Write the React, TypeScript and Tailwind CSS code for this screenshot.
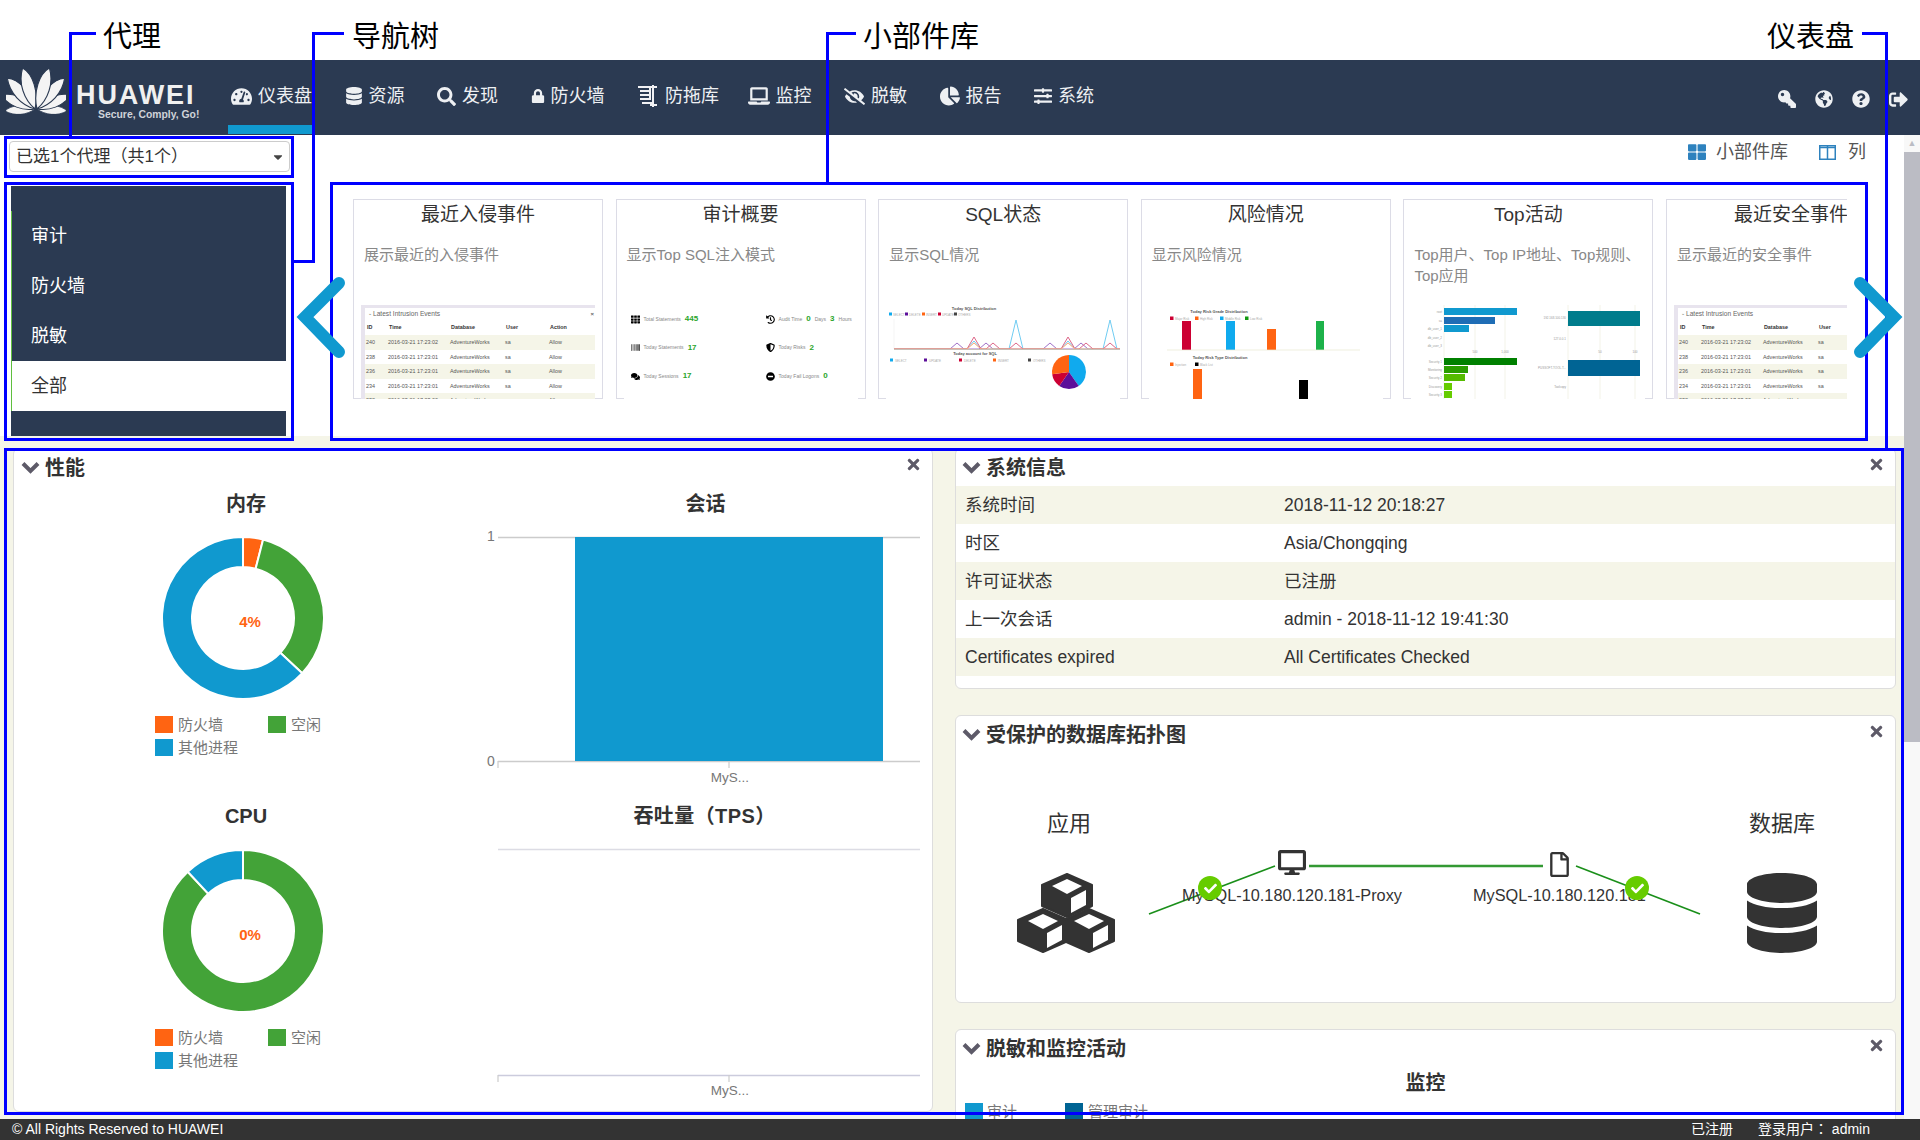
import React from 'react';
import {
  FaTachometerAlt,
  FaDatabase,
  FaSearch,
  FaLock,
  FaLaptop,
  FaEyeSlash,
  FaChartPie,
  FaSlidersH,
  FaKey,
  FaGlobeAmericas,
  FaQuestionCircle,
  FaSignOutAlt,
  FaThLarge,
  FaTimes,
  FaDesktop,
  FaRegFile,
  FaCheck,
  FaCaretDown,
  FaTh,
  FaBarcode,
  FaComments,
  FaHistory,
  FaShieldAlt,
  FaMinusCircle,
} from 'react-icons/fa';

const BLUE = '#1099cf';
const GREEN = '#43a338';
const ORANGE = '#ff6412';
const TC_FONT = "[font-family:'Liberation_Sans','Noto_Sans_CJK_TC',sans-serif]";

function DragIcon() {
  return (
    <svg width="22" height="24" viewBox="0 0 22 24" fill="none" stroke="#f1f1f4" strokeWidth="2">
      <path d="M1 3h12v12H3" />
      <path d="M3 7h10M3 11h10" />
      <path d="M16 1v22M13 3h7M13 21h7M5 19h11" />
    </svg>
  );
}

const navItems = [
  { label: '仪表盘', icon: <FaTachometerAlt size={21} />, active: true, cls: '' },
  { label: '资源', icon: <FaDatabase size={18} />, cls: '' },
  { label: '发现', icon: <FaSearch size={19} />, cls: '' },
  { label: '防火墙', icon: <FaLock size={14} />, cls: '' },
  { label: '防拖库', icon: <DragIcon />, cls: '' },
  { label: '监控', icon: <FaLaptop size={22} />, cls: '-ml-[4px]' },
  { label: '脱敏', icon: <FaEyeSlash size={21} />, cls: '' },
  { label: '报告', icon: <FaChartPie size={20} />, cls: '' },
  { label: '系统', icon: <FaSlidersH size={18} />, cls: '' },
];

function Logo() {
  const petals = [
    { a: 90, l: 0.68 },
    { a: 64, l: 0.82 },
    { a: 38, l: 0.94 },
    { a: 13, l: 0.97 },
  ];
  return (
    <svg width="60" height="46" viewBox="0 0 60 46" fill="#f4f4f4" stroke="#2b3a52" strokeWidth="1.2" className="shrink-0">
      {petals.map((p) => (
        <g key={p.a}>
          <path transform={`translate(29 41) rotate(${-p.a}) scale(${p.l})`} d="M0 0C-9 -12 -11 -30 -3 -44C6 -36 8 -16 0 0Z" />
          <path transform={`translate(31 41) rotate(${p.a}) scale(${p.l})`} d="M0 0C9 -12 11 -30 3 -44C-6 -36 -8 -16 0 0Z" />
        </g>
      ))}
    </svg>
  );
}

function Header() {
  return (
    <div className="h-[75px] bg-[#2b3a52] flex text-[#eef0f3] shrink-0">
      <div className="w-[231px] shrink-0 flex pl-[6px] pt-[8px]">
        <Logo />
        <div className="ml-[10px] pt-[14px] w-[120px]">
          <div className="text-[27px] leading-[27px] font-bold tracking-[1.9px] text-[#f0f0f0] whitespace-nowrap">HUAWEI</div>
          <div className="pl-[22px] text-[10.4px] leading-[14px] font-bold text-[#d0d3d9] whitespace-nowrap -mt-[1px]">Secure, Comply, Go!</div>
        </div>
      </div>
      <div className="flex gap-[32.5px] h-full">
        {navItems.map((item) => (
          <div key={item.label} className={`relative flex items-center gap-[6px] h-full pb-[3px] ${item.cls}`}>
            <span className="flex items-center justify-center">{item.icon}</span>
            <span className="text-[18px] whitespace-nowrap">{item.label}</span>
            {item.active && <div className="absolute left-[-3px] right-0 top-[65px] h-[9px] bg-[#1099cf]" />}
          </div>
        ))}
      </div>
      <div className="ml-auto flex items-center gap-[19px] pr-[12px] pt-[3px]">
        <FaKey size={18} className="-scale-x-100" />
        <FaGlobeAmericas size={18} />
        <FaQuestionCircle size={18} />
        <FaSignOutAlt size={19} />
      </div>
    </div>
  );
}

const tableRows = [
  ['240', '2016-03-21 17:23:02'],
  ['238', '2016-03-21 17:23:01'],
  ['236', '2016-03-21 17:23:01'],
  ['234', '2016-03-21 17:23:01'],
  ['232', '2016-03-21 17:23:00'],
];

function TableThumb() {
  return (
    <div className="h-full bg-[#e8e4ee] pl-[4px] pt-[3px] pr-[1px]">
      <div className="w-[232px] h-full bg-white text-[5.4px] text-[#555]">
        <div className="h-[11px] flex items-center pl-[3px] text-[6.6px] text-[#666] relative">
          <span className="mr-[1px] text-[5px]">⌄</span>Latest Intrusion Events
          <span className="absolute right-[3px] top-[2px] text-[6px] font-bold">×</span>
        </div>
        <div className="h-[16px] grid grid-cols-[22px_62px_55px_44px_1fr] items-center pl-[2px] font-bold text-[#333]">
          <span>ID</span>
          <span>Time</span>
          <span>Database</span>
          <span>User</span>
          <span>Action</span>
        </div>
        {tableRows.map((r, i) => (
          <div
            key={r[0]}
            className={`h-[14.5px] grid grid-cols-[22px_62px_55px_44px_1fr] items-center pl-[1px] ${i % 2 === 0 ? 'bg-[#f5f5e8]' : 'bg-white'}`}
          >
            <span>{r[0]}</span>
            <span>{r[1]}</span>
            <span>AdventureWorks</span>
            <span>sa</span>
            <span>Allow</span>
          </div>
        ))}
      </div>
    </div>
  );
}

function StatsThumb() {
  const stats = [
    { icon: <FaTh size={9} />, label: 'Total Statements', value: '445' },
    { icon: <FaHistory size={9} />, label: 'Audit Time', value: '0', extra: true },
    { icon: <FaBarcode size={9} />, label: 'Today Statements', value: '17' },
    { icon: <FaShieldAlt size={9} />, label: 'Today Risks', value: '2' },
    { icon: <FaComments size={9} />, label: 'Today Sessions', value: '17' },
    { icon: <FaMinusCircle size={9} />, label: 'Today Fail Logons', value: '0' },
  ];
  return (
    <div className="grid grid-cols-[135px_1fr] pl-[7px] text-[5px] text-[#888]">
      {stats.map((s) => (
        <div key={s.label} className="h-[28.5px] flex items-center gap-[4px] text-black">
          {s.icon}
          <span className="text-[#888]">{s.label}</span>
          <span className="text-[8px] font-bold text-[#2aa52a]">{s.value}</span>
          {s.extra && (
            <>
              <span className="text-[#888]">Days</span>
              <span className="text-[8px] font-bold text-[#2aa52a]">3</span>
              <span className="text-[#888]">Hours</span>
            </>
          )}
        </div>
      ))}
    </div>
  );
}

function tri(peaks: number[][]) {
  const pts: string[] = ['16,44'];
  peaks.forEach(([x, y]) => {
    pts.push(`${x - 7},44`, `${x},${y}`, `${x + 7},44`);
  });
  pts.push('242,44');
  return pts.join(' ');
}

function pt(cx: number, cy: number, r: number, deg: number) {
  const a = ((deg - 90) * Math.PI) / 180;
  return `${(cx + r * Math.cos(a)).toFixed(2)} ${(cy + r * Math.sin(a)).toFixed(2)}`;
}

function ring(cx: number, cy: number, inner: number, outer: number, a0: number, a1: number) {
  const large = a1 - a0 > 180 ? 1 : 0;
  return `M${pt(cx, cy, outer, a0)}A${outer} ${outer} 0 ${large} 1 ${pt(cx, cy, outer, a1)}L${pt(cx, cy, inner, a1)}A${inner} ${inner} 0 ${large} 0 ${pt(cx, cy, inner, a0)}Z`;
}

function pie(cx: number, cy: number, r: number, a0: number, a1: number) {
  const large = a1 - a0 > 180 ? 1 : 0;
  return `M${cx} ${cy}L${pt(cx, cy, r, a0)}A${r} ${r} 0 ${large} 1 ${pt(cx, cy, r, a1)}Z`;
}

function SqlThumb() {
  const legend1 = [
    [11, '#10aaee', 'SELECT'],
    [27, '#5c0f9a', 'DELETE'],
    [44, '#ff6412', 'INSERT'],
    [60, '#cc0033', 'UPDATE'],
    [76, '#444', 'OTHERS'],
  ] as const;
  const legend2 = [
    [12, '#10aaee', 'SELECT'],
    [46, '#5c0f9a', 'UPDATE'],
    [81, '#cc0033', 'DELETE'],
    [115, '#ff6412', 'INSERT'],
    [150, '#444', 'OTHERS'],
  ] as const;
  return (
    <svg viewBox="8 0 234 94" className="w-[234px] h-[94px]">
      <text x="96" y="5" fontSize="4" textAnchor="middle" fill="#555" fontWeight="bold">Today SQL Distribution</text>
      {legend1.map(([x, c, t]) => (
        <g key={t}>
          <rect x={x} y="7.5" width="3" height="3" fill={c} />
          <text x={x + 4} y="10.5" fontSize="3" fill="#aaa">{t}</text>
        </g>
      ))}
      <path d="M16 14V44" stroke="#eee" strokeWidth="0.6" />
      <polyline points={tri([[79, 38], [108, 38], [172, 38], [203, 38]])} fill="none" stroke="#a070c8" strokeWidth="1" />
      <polyline points={tri([[96, 36], [138, 15], [190, 36], [232, 15]])} fill="none" stroke="#70ccf2" strokeWidth="1" />
      <polyline points={tri([[96, 32], [115, 38], [138, 38], [190, 32], [208, 38], [232, 38]])} fill="none" stroke="#dd6688" strokeWidth="1" />
      <polyline points={tri([[96, 38], [190, 38]])} fill="none" stroke="#ffaa77" strokeWidth="1" />
      <line x1="16" y1="44.5" x2="242" y2="44.5" stroke="#c8c0b8" strokeWidth="1" />
      <text x="97" y="50" fontSize="4" textAnchor="middle" fill="#555" fontWeight="bold">Today account for SQL</text>
      {legend2.map(([x, c, t]) => (
        <g key={t}>
          <rect x={x} y="53.5" width="3" height="3" fill={c} />
          <text x={x + 5} y="56.5" fontSize="3" fill="#aaa">{t}</text>
        </g>
      ))}
      <path d={pie(191, 67, 17, 0, 145)} fill="#10aaee" />
      <path d={pie(191, 67, 17, 145, 215)} fill="#5c0f9a" />
      <path d={pie(191, 67, 17, 215, 262)} fill="#cc0033" />
      <path d={pie(191, 67, 17, 262, 360)} fill="#ff6412" />
    </svg>
  );
}

function RiskThumb() {
  return (
    <svg viewBox="8 0 234 94" className="w-[234px] h-[94px]">
      <text x="78" y="7.5" fontSize="4" textAnchor="middle" fill="#555" fontWeight="bold">Today Risk Grade Distribution</text>
      {[
        [29, '#cc0033', 'Major Risk'],
        [54, '#ff6412', 'High Risk'],
        [79, '#10aaee', 'Middle Risk'],
        [104, '#119911', 'Low Risk'],
      ].map(([x, c, t]) => (
        <g key={t as string}>
          <rect x={x as number} y="11.5" width="3.5" height="3.5" fill={c as string} />
          <text x={(x as number) + 5} y="15" fontSize="3" fill="#aaa">{t}</text>
        </g>
      ))}
      <rect x="41" y="16" width="9" height="29" fill="#cc0033" />
      <rect x="85" y="16" width="9" height="29" fill="#10aaee" />
      <rect x="126" y="24" width="9" height="21" fill="#ff6412" />
      <rect x="175" y="16" width="8" height="29" fill="#1db24a" />
      <line x1="26" y1="45" x2="219" y2="45" stroke="#e8e8d0" strokeWidth="0.7" />
      <text x="79" y="53.5" fontSize="4" textAnchor="middle" fill="#555" fontWeight="bold">Today Risk Type Distribution</text>
      <rect x="29" y="57.5" width="3.5" height="3.5" fill="#ff6412" />
      <text x="34" y="61" fontSize="3" fill="#aaa">Injection</text>
      <rect x="54" y="57.5" width="3.5" height="3.5" fill="#000" />
      <text x="59" y="61" fontSize="3" fill="#aaa">Black List</text>
      <rect x="52" y="64" width="9" height="32" fill="#ff6412" />
      <rect x="158" y="75" width="9" height="21" fill="#000" />
    </svg>
  );
}

function TopThumb() {
  const blue = [
    [3, 114, '#1099cf', 'root'],
    [12, 92, '#1f6db5', 'sa'],
    [20, 66, '#1099cf', 'db_user_1'],
    [29, 41, '#1099cf', 'db_user_2'],
    [37, 41, '#1099cf', 'db_user_3'],
  ] as const;
  const green = [
    [53, 114, '#008000', 'Security 1'],
    [61, 65, '#2a9d00', 'Monitoring'],
    [69, 62, '#55bb00', 'Security 2'],
    [78, 49, '#66cc00', 'Discovery'],
    [86, 49, '#66cc00', 'Security 3'],
  ] as const;
  return (
    <svg viewBox="8 0 234 94" className="w-[234px] h-[94px]">
      {[41, 72, 102, 165, 197, 232].map((x) => (
        <line key={x} x1={x} y1="0" x2={x} y2="94" stroke="#f0f0e2" strokeWidth="0.8" />
      ))}
      {blue.map(([y, x2, c, t]) => (
        <g key={t}>
          <rect x="41" y={y} width={x2 - 41} height="7" fill={c} />
          <text x="39" y={y + 5} fontSize="3" textAnchor="end" fill="#999">{t}</text>
        </g>
      ))}
      {green.map(([y, x2, c, t]) => (
        <g key={t}>
          <rect x="41" y={y} width={x2 - 41} height="7" fill={c} />
          <text x="39" y={y + 5} fontSize="3" textAnchor="end" fill="#999">{t}</text>
        </g>
      ))}
      <rect x="165" y="6" width="72" height="15" fill="#007c8c" />
      <rect x="165" y="55" width="72" height="16" fill="#006494" />
      <text x="163" y="14" fontSize="3" textAnchor="end" fill="#999">192.168.100.130</text>
      <text x="163" y="35" fontSize="3" textAnchor="end" fill="#999">127.0.0.1</text>
      <text x="163" y="64" fontSize="3" textAnchor="end" fill="#999">PUSSOFT-TOOL.T...</text>
      <text x="163" y="83" fontSize="3" textAnchor="end" fill="#999">Toolcopy</text>
      <text x="72" y="48" fontSize="3" textAnchor="middle" fill="#999">500</text>
      <text x="102" y="48" fontSize="3" textAnchor="middle" fill="#999">1,000</text>
      <text x="197" y="48" fontSize="3" textAnchor="middle" fill="#999">50</text>
      <text x="232" y="48" fontSize="3" textAnchor="middle" fill="#999">100</text>
    </svg>
  );
}

const cards = [
  { title: '最近入侵事件', desc: '展示最近的入侵事件', thumb: <TableThumb /> },
  { title: '审计概要', desc: '显示Top SQL注入模式', thumb: <StatsThumb /> },
  { title: 'SQL状态', desc: '显示SQL情况', thumb: <SqlThumb /> },
  { title: '风险情况', desc: '显示风险情况', thumb: <RiskThumb /> },
  { title: 'Top活动', desc: 'Top用户、Top IP地址、Top规则、Top应用', thumb: <TopThumb /> },
  { title: '最近安全事件', desc: '显示最近的安全事件', thumb: <TableThumb /> },
];

function WidgetCard({ title, desc, thumb }: { title: string; desc: string; thumb: React.ReactNode }) {
  return (
    <div className="w-[250px] h-[200px] shrink-0 border border-[#dcdce6] flex flex-col bg-white">
      <div className="h-[29px] text-[19px] leading-[29px] text-center text-[#333]">{title}</div>
      <p className="mt-[15px] px-[10px] text-[15px] leading-[21px] text-[#888]">{desc}</p>
      <div className="mt-auto -mb-px mx-[7px] h-[94px] overflow-hidden bg-white relative">{thumb}</div>
    </div>
  );
}

function TopSection() {
  return (
    <div className="h-[301px] shrink-0 bg-white flex">
      <div className="w-[290px] shrink-0 pl-[9px]">
        <div className={`mt-[6px] w-[281px] h-[31px] border border-[#ccc] rounded-[4px] flex items-center justify-between pl-[6px] pr-[4px] text-[17px] text-[#333] ${TC_FONT}`}>
          <span>已选1个代理（共1个）</span>
          <FaCaretDown size={14} className="text-[#444]" />
        </div>
        <div className="mt-[14px] ml-[2px] w-[275px] h-[250px] bg-[#2b3a52] pt-[25px]">
          <div className="border-l border-[#5fbf3f] text-[18px]">
            {['审计', '防火墙', '脱敏'].map((n) => (
              <div key={n} className="h-[50px] pl-[19px] flex items-center text-white">{n}</div>
            ))}
            <div className="h-[50px] pl-[19px] flex items-center bg-white text-[#333]">全部</div>
          </div>
        </div>
      </div>
      <div className="flex-1 min-w-0 relative">
        <div className="h-[34px] flex items-center justify-end text-[18px] text-[#555] pr-[38px]">
          <FaThLarge size={18} className="text-[#2e82be] mr-[10px]" />
          <span className="mr-[31px]">小部件库</span>
          <svg width="17" height="15" viewBox="0 0 17 15" fill="none" stroke="#2e82be" strokeWidth="1.5" className="mr-[12px]">
            <rect x="0.75" y="0.75" width="15.5" height="13.5" />
            <path d="M8.5 1v13M1 2.5h15" />
          </svg>
          <span>列</span>
        </div>
        <div className="mt-[30px] ml-[63px] w-[1494px] overflow-hidden flex gap-[12.6px]">
          {cards.map((c) => (
            <WidgetCard key={c.title} {...c} />
          ))}
        </div>
      </div>
    </div>
  );
}

function PanelHeader({ title }: { title: string }) {
  return (
    <div className="h-[37px] flex items-center relative">
      <svg width="19" height="13" viewBox="0 0 19 13" fill="none" stroke="#5d5a68" strokeWidth="4" className="mr-[5px]">
        <path d="M2 2.5L9.5 10L17 2.5" />
      </svg>
      <span className="text-[20px] font-bold text-[#333]">{title}</span>
      <FaTimes size={17} className="absolute right-[10px] top-[7px] text-[#5d5a68]" />
    </div>
  );
}

function Donut({ slices, label }: { slices: { a0: number; a1: number; c: string }[]; label: string }) {
  return (
    <svg width="162" height="162" viewBox="0 0 162 162" className="ml-[148px]">
      {slices.map((s) => (
        <path key={s.c} d={ring(81, 81, 51, 81, s.a0, s.a1)} fill={s.c} stroke="#fff" strokeWidth="2" />
      ))}
      <text x="88" y="90" textAnchor="middle" fontSize="15" fontWeight="bold" fill={ORANGE}>{label}</text>
    </svg>
  );
}

function DonutLegend() {
  return (
    <div className="mt-[17px] ml-[141px] grid grid-cols-[113px_100px] gap-y-[6px] text-[15px] leading-[17px] text-[#777]">
      <div className="flex items-center gap-[5px]"><span className="w-[18px] h-[17px] bg-[#ff6412]" />防火墙</div>
      <div className="flex items-center gap-[5px]"><span className="w-[18px] h-[17px] bg-[#43a338]" />空闲</div>
      <div className="flex items-center gap-[5px]"><span className="w-[18px] h-[17px] bg-[#1099cf]" />其他进程</div>
    </div>
  );
}

function ChartTitle({ children, className = '' }: { children: React.ReactNode; className?: string }) {
  return <div className={`h-[28px] text-[20px] leading-[30px] font-bold text-center text-[#333] ${className}`}>{children}</div>;
}

function PerformancePanel() {
  return (
    <div className="w-[920px] h-[664px] shrink-0 bg-white border border-[#ddd] rounded-[6px] pl-[7px] overflow-hidden">
      <PanelHeader title="性能" />
      <div className="flex mt-[3px]">
        <div className="w-[464px] shrink-0 -ml-[7px]">
          <div className="h-[312px]">
            <ChartTitle>内存</ChartTitle>
            <div className="mt-[20px]">
              <Donut
                label="4%"
                slices={[
                  { a0: 0, a1: 14.4, c: ORANGE },
                  { a0: 14.4, a1: 133, c: GREEN },
                  { a0: 133, a1: 360, c: BLUE },
                ]}
              />
            </div>
            <DonutLegend />
          </div>
          <div className="h-[312px]">
            <ChartTitle>CPU</ChartTitle>
            <div className="mt-[21px]">
              <Donut
                label="0%"
                slices={[
                  { a0: 0, a1: 317, c: GREEN },
                  { a0: 317, a1: 360, c: BLUE },
                ]}
              />
            </div>
            <DonutLegend />
          </div>
        </div>
        <div className="w-[455px] shrink-0">
          <div className="h-[312px]">
            <ChartTitle>会话</ChartTitle>
            <svg width="455" height="284" viewBox="0 0 455 284" fontFamily="Liberation Sans, sans-serif">
              <line x1="20" y1="20.5" x2="442" y2="20.5" stroke="#ccc" strokeWidth="1.5" />
              <line x1="20" y1="244.5" x2="442" y2="244.5" stroke="#ccc" strokeWidth="1.5" />
              <path d="M20 244v7M251 244v7" stroke="#ccc" strokeWidth="1.2" />
              <rect x="97" y="20" width="308" height="224" fill={BLUE} />
              <text x="13" y="24" fontSize="14" textAnchor="middle" fill="#777">1</text>
              <text x="13" y="249" fontSize="14" textAnchor="middle" fill="#777">0</text>
              <text x="252" y="265" fontSize="13.5" textAnchor="middle" fill="#777">MyS...</text>
            </svg>
          </div>
          <div className="h-[312px]">
            <ChartTitle className={`-ml-[2px] tracking-[0.4px] ${TC_FONT}`}>吞吐量（TPS）</ChartTitle>
            <svg width="455" height="284" viewBox="0 0 455 284" fontFamily="Liberation Sans, sans-serif">
              <line x1="20" y1="20.5" x2="442" y2="20.5" stroke="#dcdce4" strokeWidth="1.5" />
              <line x1="20" y1="246.5" x2="442" y2="246.5" stroke="#ccd" strokeWidth="1.5" />
              <path d="M20 246v7M251 246v7" stroke="#ccc" strokeWidth="1.2" />
              <text x="252" y="266" fontSize="13.5" textAnchor="middle" fill="#777">MyS...</text>
            </svg>
          </div>
        </div>
      </div>
    </div>
  );
}

const sysRows = [
  ['系统时间', '2018-11-12 20:18:27'],
  ['时区', 'Asia/Chongqing'],
  ['许可证状态', '已注册'],
  ['上一次会话', 'admin - 2018-11-12 19:41:30'],
  ['Certificates expired', 'All Certificates Checked'],
];

function SystemPanel() {
  return (
    <div className="h-[241px] shrink-0 bg-white border border-[#ddd] rounded-[6px]">
      <div className="pl-[6px]"><PanelHeader title="系统信息" /></div>
      {sysRows.map((r, i) => (
        <div key={r[0]} className={`h-[38px] flex items-center pl-[9px] text-[17.5px] text-[#333] ${i % 2 === 0 ? 'bg-[#f5f5e8]' : 'bg-white'}`}>
          <span className="w-[319px] shrink-0">{r[0]}</span>
          <span>{r[1]}</span>
        </div>
      ))}
    </div>
  );
}

function CheckBadge({ className }: { className: string }) {
  return (
    <div className={`absolute w-[24px] h-[24px] rounded-full bg-[#66cc00] flex items-center justify-center text-white ${className}`}>
      <FaCheck size={13} />
    </div>
  );
}

// one isometric block of the cubes drawing
function Cube({ cx, top }: { cx: number; top: number }) {
  const w = 50;
  const h = 43;
  return (
    <g>
      <path
        d={`M${cx} ${top}L${cx + w / 2} ${top + 11}V${top + h - 11}L${cx} ${top + h}L${cx - w / 2} ${top + h - 11}V${top + 11}Z`}
        fill="#333"
        stroke="#333"
        strokeWidth="2"
        strokeLinejoin="round"
      />
      <path d={`M${cx} ${top + 5}L${cx + 15} ${top + 12}L${cx} ${top + 20}L${cx - 15} ${top + 12}Z`} fill="#fff" />
      <path d={`M${cx + 4} ${top + 24}L${cx + 19} ${top + 16}V${top + 31}L${cx + 4} ${top + 39}Z`} fill="#fff" />
    </g>
  );
}

function CubesIcon() {
  return (
    <svg width="98" height="80" viewBox="0 0 98 80" className="absolute left-[55px] top-[120px]">
      <Cube cx={50} top={1} />
      <Cube cx={26} top={36} />
      <Cube cx={72} top={36} />
    </svg>
  );
}

function TopologyPanel() {
  return (
    <div className="h-[288px] bg-white border border-[#ddd] rounded-[6px] pl-[6px] shrink-0">
      <PanelHeader title="受保护的数据库拓扑图" />
      {/* diagram is a free canvas, origin at panel left + header bottom */}
      <div className="relative h-[249px]">
        <svg width="934" height="249" viewBox="0 0 934 249" className="absolute left-0 top-0">
          <line x1="187" y1="161" x2="313" y2="113" stroke="#1a8f1a" strokeWidth="1.6" />
          <line x1="347" y1="113" x2="581" y2="113" stroke="#339933" strokeWidth="2.5" />
          <line x1="614" y1="113" x2="738" y2="161" stroke="#1a8f1a" strokeWidth="1.6" />
        </svg>
        <div className="absolute left-[83px] top-[57px] w-[48px] text-center text-[22px] leading-[28px] text-[#333]">应用</div>
        <div className="absolute left-[786px] top-[57px] w-[68px] text-center text-[22px] leading-[28px] text-[#333]">数据库</div>
        <CubesIcon />
        <FaDatabase className="absolute left-[785px] top-[120px] w-[70px] h-[80px] text-[#333]" />
        <FaDesktop className="absolute left-[316px] top-[97px] w-[28px] h-[25px] text-[#333]" />
        <FaRegFile className="absolute left-[587px] top-[99px] w-[21px] h-[25px] text-[#333]" />
        <span className="absolute left-[220px] top-[130px] text-[16.3px] leading-[24px] text-[#333] whitespace-nowrap">MySQL-10.180.120.181-Proxy</span>
        <span className="absolute left-[511px] top-[130px] text-[16.3px] leading-[24px] text-[#333] whitespace-nowrap">MySQL-10.180.120.181</span>
        <CheckBadge className="left-[236px] top-[123px]" />
        <CheckBadge className="left-[663px] top-[123px]" />
      </div>
    </div>
  );
}

function ActivityPanel() {
  return (
    <div className="h-[140px] bg-white border border-[#ddd] rounded-[6px] pl-[6px] shrink-0">
      <PanelHeader title="脱敏和监控活动" />
      <div className="h-[28px] text-[20px] leading-[28px] font-bold text-center text-[#333] -ml-[6px] pt-[2px]">监控</div>
      <div className="mt-[8px] ml-[3px] flex text-[15px] leading-[18px] text-[#777]">
        <div className="w-[100px] flex items-center gap-[4px]"><span className="w-[18px] h-[18px] bg-[#1099cf]" />审计</div>
        <div className="flex items-center gap-[5px]"><span className="w-[18px] h-[18px] bg-[#006494]" />管理审计</div>
      </div>
    </div>
  );
}

function Callouts() {
  const line = 'absolute bg-[#0000ff]';
  const box = 'absolute border-[3px] border-[#0000ff]';
  const text = 'absolute top-[17px] text-[29px] leading-[40px] text-black whitespace-nowrap';
  return (
    <div className="absolute inset-0 pointer-events-none">
      <div className={`${line} left-[69px] top-[32px] w-[27px] h-[3px]`} />
      <div className={`${line} left-[69px] top-[32px] w-[3px] h-[105px]`} />
      <span className={`${text} left-[103px]`}>代理</span>
      <div className={`${line} left-[312px] top-[32px] w-[32px] h-[3px]`} />
      <div className={`${line} left-[312px] top-[32px] w-[3px] h-[231px]`} />
      <div className={`${line} left-[293px] top-[260px] w-[22px] h-[3px]`} />
      <span className={`${text} left-[352px]`}>导航树</span>
      <div className={`${line} left-[826px] top-[32px] w-[30px] h-[3px]`} />
      <div className={`${line} left-[826px] top-[32px] w-[3px] h-[151px]`} />
      <span className={`${text} left-[863px]`}>小部件库</span>
      <div className={`${line} left-[1862px] top-[32px] w-[26px] h-[3px]`} />
      <div className={`${line} left-[1885px] top-[32px] w-[3px] h-[418px]`} />
      <span className={`${text} left-[1767px]`}>仪表盘</span>

      <div className={`${box} left-[4px] top-[136px] w-[290px] h-[42px]`} />
      <div className={`${box} left-[4px] top-[182px] w-[290px] h-[259px]`} />
      <div className={`${box} left-[330px] top-[182px] w-[1538px] h-[259px]`} />
      <div className={`${box} left-[4px] top-[448px] w-[1900px] h-[667px]`} />

      <svg width="1920" height="1140" className="absolute inset-0" fill="none" stroke="#1099cf" strokeWidth="12" strokeLinecap="round" strokeLinejoin="miter">
        <path d="M339 283L305 317L339 352" />
        <path d="M1860 283L1894 317L1860 352" />
      </svg>
    </div>
  );
}

export default function App() {
  return (
    <div className="relative w-[1920px] h-[1140px] overflow-hidden bg-white flex flex-col [font-family:'Liberation_Sans','Noto_Sans_CJK_SC',sans-serif]">
      <div className="h-[60px] shrink-0" />
      <Header />
      <div className="flex-1 min-h-0 flex">
        <div className="w-[1904px] shrink-0 flex flex-col">
          <TopSection />
          <div className="flex-1 min-h-0 bg-[#f5f5e8] pt-[12px] pl-[13px] flex gap-[22px] overflow-hidden">
            <PerformancePanel />
            <div className="w-[941px] shrink-0 flex flex-col gap-[26px]">
              <SystemPanel />
              <TopologyPanel />
              <ActivityPanel />
            </div>
          </div>
        </div>
        <div className="w-[16px] shrink-0 bg-[#f8f8f8] flex flex-col">
          <div className="h-[17px] flex items-center justify-center text-[9px] text-[#bbbcc4]">▲</div>
          <div className="h-[590px] bg-[#bbbcc4]" />
        </div>
      </div>
      <div className={`h-[21px] shrink-0 bg-[#333] text-white text-[14px] leading-[21px] flex justify-between pl-[12px] pr-[50px] z-10 ${TC_FONT}`}>
        <span>© All Rights Reserved to HUAWEI</span>
        <div className="flex gap-[25px]">
          <span>已注册</span>
          <span>登录用户： admin</span>
        </div>
      </div>
      <Callouts />
    </div>
  );
}
